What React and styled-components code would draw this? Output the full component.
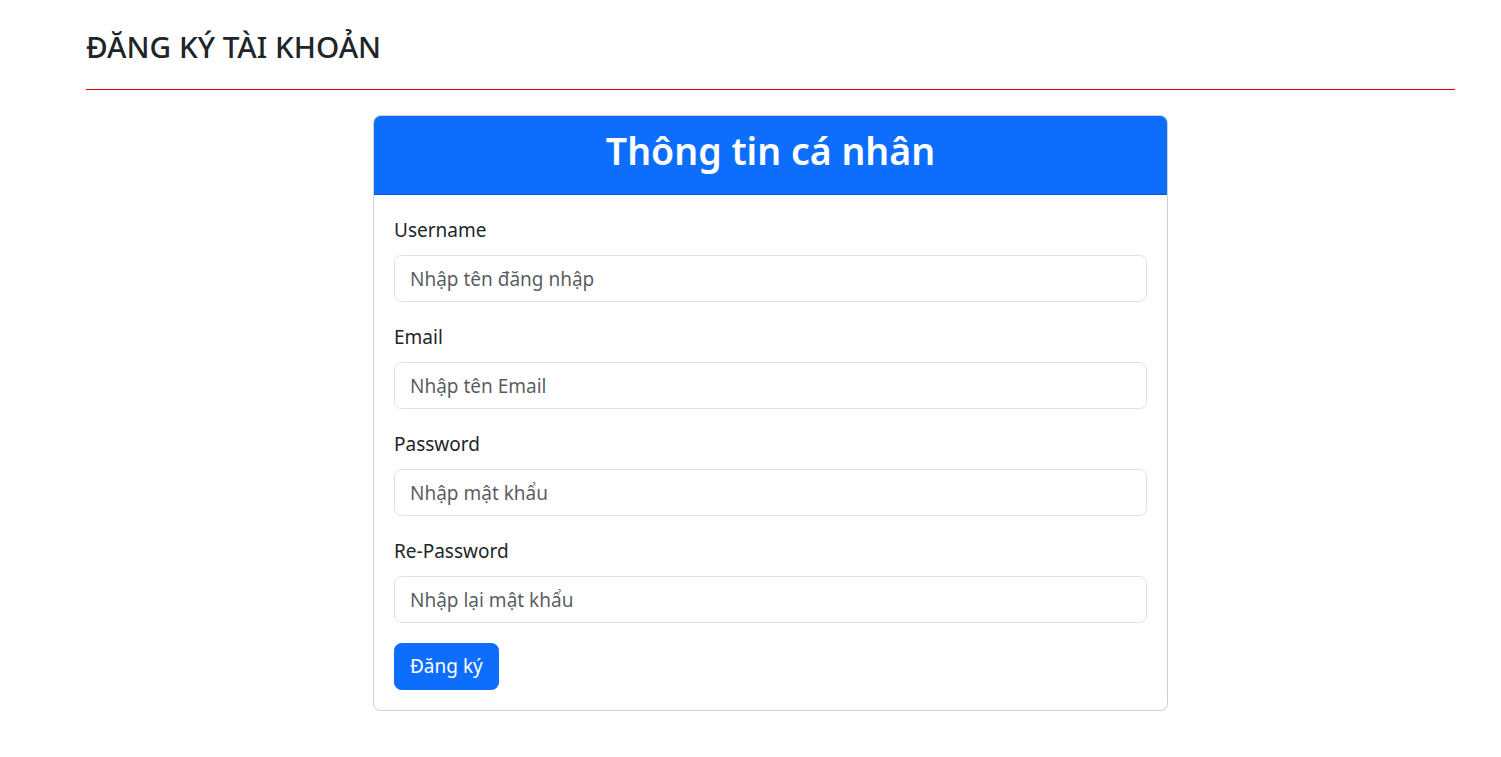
import React from "react"
import styled, { createGlobalStyle } from "styled-components"

const GlobalStyle = createGlobalStyle`
  * { box-sizing: border-box; }
  body {
    margin: 0;
    background: #fff;
    color: #212529;
    font-family: "Noto Sans", "Open Sans", sans-serif;
    font-size: 20px;
    line-height: 1.5;
  }
`

const Page = styled.div`
  padding: 29px 46px 40px 86px;
`
const PageTitle = styled.h4`
  margin: 0;
  font-size: 29.7px;
  font-weight: 500;
  line-height: 36px;
  color: #212529;
`
const Divider = styled.hr`
  margin: 24px 0 25px;
  border: 0;
  border-top: 1px solid #e00000;
`
const Card = styled.div`
  width: 795px;
  margin: 0 auto;
  border: 1px solid rgba(0, 0, 0, 0.175);
  border-radius: 7.5px;
  overflow: hidden;
`
const CardHeader = styled.div`
  background: #0d6efd;
  border-bottom: 1px solid rgba(0, 0, 0, 0.175);
  padding: 11px 20px 19px;
  text-align: center;
`
const HeaderTitle = styled.h2`
  margin: 0;
  color: #fff;
  font-size: 37.5px;
  font-weight: 600;
  line-height: 48px;
`
const CardBody = styled.form`
  padding: 20px;
`
const Field = styled.div`
  margin-bottom: 20px;
`
const Label = styled.label`
  display: block;
  margin-bottom: 10px;
  padding-top: 1px;
  font-size: 19px;
  line-height: 29px;
`
const Input = styled.input`
  display: block;
  width: 100%;
  height: 47px;
  padding: 7.5px 15px;
  font: inherit;
  font-size: 19px;
  color: #212529;
  border: 1px solid #dee2e6;
  border-radius: 7.5px;
  outline: none;
  &::placeholder {
    color: rgba(33, 37, 41, 0.75);
  }
`
const Button = styled.button`
  height: 47px;
  padding: 7.5px 15px;
  font: inherit;
  font-size: 19px;
  color: #fff;
  background: #0d6efd;
  border: 1px solid #0d6efd;
  border-radius: 7.5px;
  cursor: pointer;
`

const fields = [
  { label: "Username", placeholder: "Nhập tên đăng nhập", type: "text" },
  { label: "Email", placeholder: "Nhập tên Email", type: "email" },
  { label: "Password", placeholder: "Nhập mật khẩu", type: "password" },
  { label: "Re-Password", placeholder: "Nhập lại mật khẩu", type: "password" },
]

export default function App() {
  return (
    <Page>
      <GlobalStyle />
      <PageTitle>ĐĂNG KÝ TÀI KHOẢN</PageTitle>
      <Divider />
      <Card>
        <CardHeader>
          <HeaderTitle>Thông tin cá nhân</HeaderTitle>
        </CardHeader>
        <CardBody onSubmit={e => e.preventDefault()}>
          {fields.map(f => (
            <Field key={f.label}>
              <Label>{f.label}</Label>
              <Input type={f.type} placeholder={f.placeholder} />
            </Field>
          ))}
          <Button type="submit">Đăng ký</Button>
        </CardBody>
      </Card>
    </Page>
  )
}
